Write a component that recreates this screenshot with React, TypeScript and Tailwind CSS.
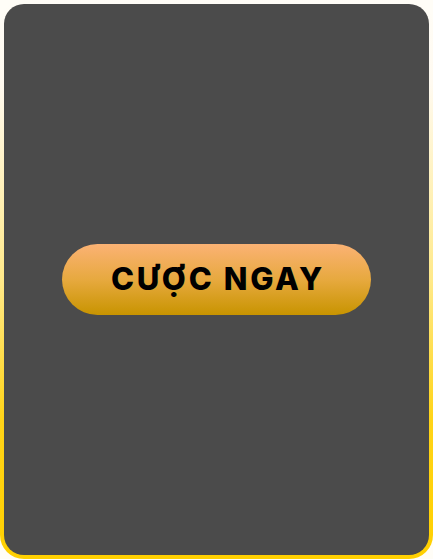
export default function App() {
  return (
    <div className="w-[433px] h-[559px] bg-[#fffdf7]">
      <div className="w-full h-full rounded-[24px] p-[4px] bg-[linear-gradient(to_bottom,#fffdf7_0%,#fffaf0_15%,#ffe98a_50%,#ffd418_75%,#ffd000_100%)]">
        <div className="w-full h-full rounded-[20px] bg-[#4b4b4b] flex items-center justify-center">
          <button className="w-[309px] h-[71px] rounded-full bg-[linear-gradient(to_bottom,#fbb274,#e7a93f_50%,#c89400)] flex items-center justify-center">
            <span className="text-[31px] font-extrabold text-black tracking-[2.6px] pl-[3px]" style={{ fontFamily: "Inter, 'Noto Sans', sans-serif" }}>
              CƯỢC NGAY
            </span>
          </button>
        </div>
      </div>
    </div>
  );
}
